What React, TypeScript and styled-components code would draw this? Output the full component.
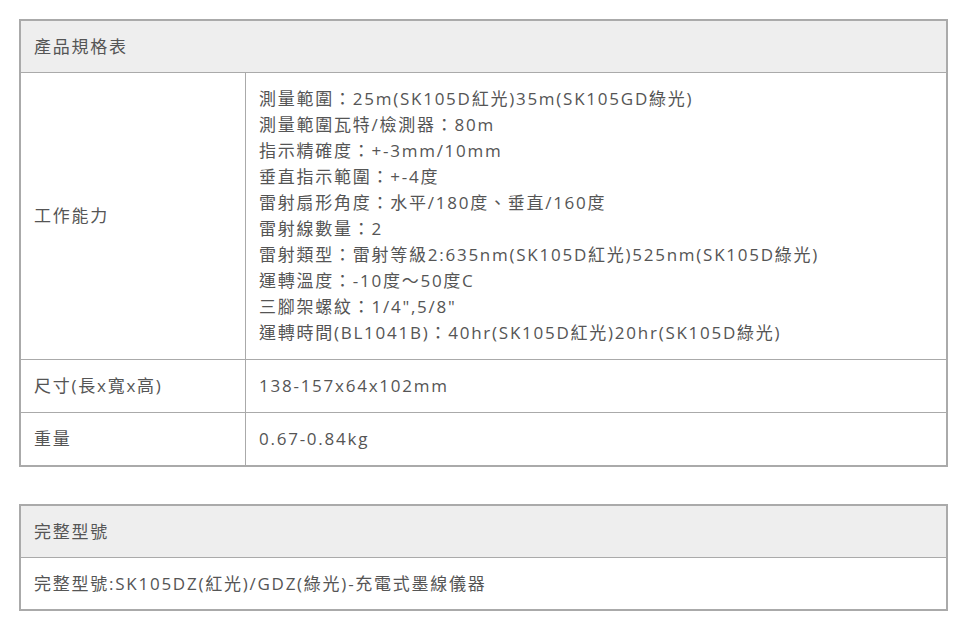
import styled, { createGlobalStyle } from 'styled-components';

const GlobalStyle = createGlobalStyle`
  body {
    margin: 0;
    background: #fff;
    font-family: "Open Sans", "Noto Sans CJK TC", sans-serif;
    color: #555;
  }
`;

const Page = styled.div`
  padding: 19px 22px 19px 19px;
  display: flex;
  flex-direction: column;
  gap: 37px;
`;

const Table = styled.table`
  width: 929px;
  border-collapse: collapse;
  border: 2px solid #aaa;
  font-size: 17px;
  line-height: 26px;
  letter-spacing: 1.75px;
`;

const HeadCell = styled.th`
  background: #eee;
  text-align: left;
  font-weight: normal;
  padding: 13px 13px 12px;
  border-bottom: 1px solid #aaa;
`;

const LabelCell = styled.td`
  width: 198px;
  padding: 13px 13px;
  border-right: 1px solid #aaa;
  border-bottom: 1px solid #aaa;
  vertical-align: middle;
`;

const ValueCell = styled.td<{ $compact?: boolean }>`
  padding: ${({ $compact }) => ($compact ? '13px 13px 12px' : '13px 13px')};
  border-bottom: 1px solid #aaa;
  vertical-align: middle;
`;

const Line = styled.div``;

const abilities = [
  '測量範圍：25m(SK105D紅光)35m(SK105GD綠光)',
  '測量範圍瓦特/檢測器：80m',
  '指示精確度：+-3mm/10mm',
  '垂直指示範圍：+-4度',
  '雷射扇形角度：水平/180度、垂直/160度',
  '雷射線數量：2',
  '雷射類型：雷射等級2:635nm(SK105D紅光)525nm(SK105D綠光)',
  '運轉溫度：-10度～50度C',
  '三腳架螺紋：1/4",5/8"',
  '運轉時間(BL1041B)：40hr(SK105D紅光)20hr(SK105D綠光)',
];

const App = () => {
  return (
    <>
      <GlobalStyle />
      <Page>
        <Table>
          <thead>
            <tr>
              <HeadCell colSpan={2}>產品規格表</HeadCell>
            </tr>
          </thead>
          <tbody>
            <tr>
              <LabelCell>工作能力</LabelCell>
              <ValueCell>
                {abilities.map((a) => (
                  <Line key={a}>{a}</Line>
                ))}
              </ValueCell>
            </tr>
            <tr>
              <LabelCell>尺寸(長x寬x高)</LabelCell>
              <ValueCell>138-157x64x102mm</ValueCell>
            </tr>
            <tr>
              <LabelCell>重量</LabelCell>
              <ValueCell>0.67-0.84kg</ValueCell>
            </tr>
          </tbody>
        </Table>
        <Table>
          <thead>
            <tr>
              <HeadCell>完整型號</HeadCell>
            </tr>
          </thead>
          <tbody>
            <tr>
              <ValueCell $compact>完整型號:SK105DZ(紅光)/GDZ(綠光)-充電式墨線儀器</ValueCell>
            </tr>
          </tbody>
        </Table>
      </Page>
    </>
  );
};

export default App;
